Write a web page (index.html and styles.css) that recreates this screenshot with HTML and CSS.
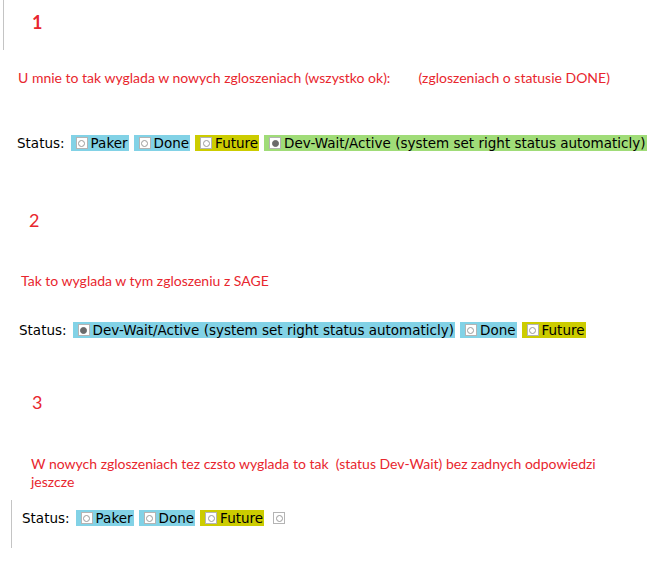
FILE: index.html
```html
<!DOCTYPE html>
<html>
<head>
<meta charset="utf-8">
<link rel="stylesheet" href="styles.css">
</head>
<body>
<div class="page">
  <div class="sec1">
    <div class="num bold">1</div>
  </div>
  <div class="note n1">
    <span>U mnie to tak wyglada w nowych zgloszeniach (wszystko ok):</span>
    <span class="aside">(zgloszeniach o statusie DONE)</span>
  </div>
  <div class="status s1">
    <span class="label">Status:</span>
    <span class="pill blue"><i class="radio"></i>Paker</span>
    <span class="pill blue"><i class="radio"></i>Done</span>
    <span class="pill yellow"><i class="radio"></i>Future</span>
    <span class="pill green"><i class="radio on"></i>Dev-Wait/Active (system set right status automaticly)</span>
  </div>

  <div class="num n2">2</div>
  <div class="note t2">Tak to wyglada w tym zgloszeniu z SAGE</div>
  <div class="status s2">
    <span class="label">Status:</span>
    <span class="pill blue"><i class="radio on"></i>Dev-Wait/Active (system set right status automaticly)</span>
    <span class="pill blue"><i class="radio"></i>Done</span>
    <span class="pill yellow"><i class="radio"></i>Future</span>
  </div>

  <div class="num n3">3</div>
  <div class="note t3">W nowych zgloszeniach tez czsto wyglada to tak&nbsp; (status Dev-Wait) bez zadnych odpowiedzi<br>jeszcze</div>
  <div class="sec3">
    <div class="status s3">
      <span class="label">Status:</span>
      <span class="pill blue"><i class="radio"></i>Paker</span>
      <span class="pill blue"><i class="radio"></i>Done</span>
      <span class="pill yellow"><i class="radio"></i>Future</span>
      <span class="pill plain"><i class="radio"></i></span>
    </div>
  </div>
</div>
</body>
</html>
```

FILE: styles.css
```css
html, body {
  margin: 0;
  padding: 0;
  background: #ffffff;
}
.page {
  width: 672px;
  height: 587px;
  display: flex;
  flex-direction: column;
  font-family: "Lato", "Open Sans", sans-serif;
  color: #e8262e;
  overflow: hidden;
}
.sec1 {
  margin-left: 3px;
  height: 50px;
  border-left: 1px solid #c4c4c4;
  box-sizing: border-box;
  padding: 12px 0 0 28px;
}
.num {
  font-size: 18px;
  line-height: 20px;
  height: 20px;
}
.bold {
  font-weight: 700;
}
.note {
  font-size: 14px;
  line-height: 18px;
}
.n1 {
  margin-top: 19px;
  padding-left: 18px;
  display: flex;
}
.aside {
  margin-left: 28px;
}
.status {
  display: flex;
  align-items: center;
  font-family: "DejaVu Sans", Verdana, sans-serif;
  font-size: 13.5px;
  color: #000000;
  height: 16px;
  gap: 5px;
}
.label {
  margin-right: 1px;
}
.s1 {
  margin-top: 48px;
  padding-left: 17px;
}
.pill {
  display: flex;
  align-items: center;
  height: 16px;
  padding: 0 1px 0 5px;
  box-sizing: border-box;
  white-space: nowrap;
}
.blue { background: #82d2e6; }
.yellow { background: #cccc00; }
.green { background: #a0dc78; }
.plain { background: transparent; padding-left: 4px; }
.radio {
  width: 12px;
  height: 12px;
  box-sizing: border-box;
  background: #ffffff;
  border: 1px solid #b4b4b4;
  margin-right: 3px;
  display: flex;
  align-items: center;
  justify-content: center;
  flex: none;
}
.plain .radio {
  margin-right: 0;
}
.radio::after {
  content: "";
  width: 5px;
  height: 5px;
  border-radius: 50%;
  border: 1px solid #9a9a9a;
}
.radio.on::after {
  background: #6a6a6a;
  border-color: #6a6a6a;
}
.n2 {
  margin-top: 59px;
  padding-left: 29px;
}
.t2 {
  margin-top: 42px;
  padding-left: 21px;
}
.s2 {
  margin-top: 32px;
  padding-left: 19px;
}
.n3 {
  margin-top: 54px;
  padding-left: 32px;
}
.t3 {
  margin-top: 43px;
  padding-left: 31px;
}
.sec3 {
  margin-top: 9px;
  margin-left: 11px;
  height: 48px;
  border-left: 1px solid #c4c4c4;
  box-sizing: border-box;
  padding: 10px 0 0 10px;
}
```
